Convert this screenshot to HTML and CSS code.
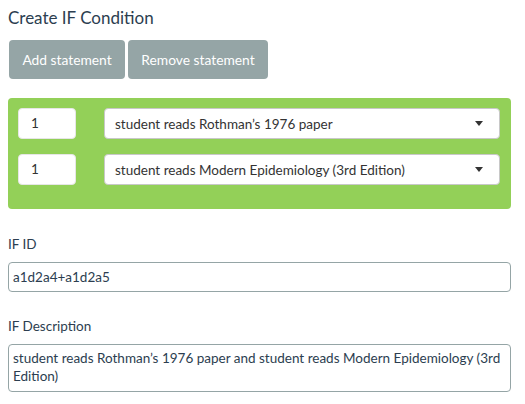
FILE: index.html
```html
<!DOCTYPE html>
<html>
<head>
<meta charset="utf-8">
<link rel="stylesheet" href="styles.css">
</head>
<body>
<div class="page">
  <h3 class="title">Create IF Condition</h3>
  <div class="btns">
    <button class="btn btn-add">Add statement</button>
    <button class="btn btn-remove">Remove statement</button>
  </div>
  <div class="panel">
    <div class="row">
      <div class="num">1</div>
      <div class="select"><span>student reads Rothman’s 1976 paper</span><i class="caret"></i></div>
    </div>
    <div class="row">
      <div class="num">1</div>
      <div class="select"><span>student reads Modern Epidemiology (3rd Edition)</span><i class="caret"></i></div>
    </div>
  </div>
  <label class="label label-id">IF ID</label>
  <div class="field">a1d2a4+a1d2a5</div>
  <label class="label label-desc">IF Description</label>
  <div class="field area">student reads Rothman’s 1976 paper and student reads Modern Epidemiology (3rd Edition)</div>
</div>
</body>
</html>
```

FILE: styles.css
```css
html, body { margin: 0; padding: 0; background: #fff; }
body {
  margin: 8px;
  font-family: Lato, "Open Sans", sans-serif;
  font-size: 13.5px;
  color: #2c3e50;
}
.page { width: 503px; }
.title {
  margin: 0;
  font-size: 17px;
  font-weight: 400;
  line-height: 20px;
  height: 20px;
  color: #2c3e50;
}
.btns {
  display: flex;
  gap: 3px;
  margin-top: 12px;
  padding-left: 1px;
}
.btn {
  height: 39px;
  border: none;
  border-radius: 4px;
  background: #95a5a6;
  color: #fff;
  font-family: Lato, sans-serif;
  font-size: 13.8px;
  padding: 0;
  line-height: 37px;
}
.btn-add { width: 116px; }
.btn-remove { width: 140px; }
.panel {
  margin-top: 19px;
  background: #93d058;
  border-radius: 4px;
  padding: 10px 11px 9px 10px;
}
.row {
  display: flex;
  margin-bottom: 15px;
  height: 31px;
}
.num {
  width: 58px;
  box-sizing: border-box;
  background: #fff;
  border: 1px solid #e6e6e6;
  border-radius: 4px;
  padding-left: 12px;
  line-height: 29px;
  color: #333;
}
.select {
  flex: 1;
  margin-left: 28px;
  box-sizing: border-box;
  background: #fff;
  border: 1px solid #c8c8c8;
  border-radius: 4px;
  padding-left: 10px;
  padding-right: 16px;
  display: flex;
  align-items: center;
  justify-content: space-between;
  color: #333;
}
.caret {
  width: 0;
  height: 0;
  border-left: 4px solid transparent;
  border-right: 4px solid transparent;
  border-top: 5px solid #333;
}
.label {
  display: block;
  line-height: 20px;
  color: #2c3e50;
}
.label-id { margin-top: 25px; }
.label-desc { margin-top: 24px; }
.field {
  margin-top: 8px;
  box-sizing: border-box;
  border: 1px solid #95a5a6;
  border-radius: 4px;
  padding: 5px 4px 4px;
  line-height: 18px;
  height: 30px;
  color: #2c3e50;
}
.field.area {
  height: 48px;
  padding: 4px 4px;
}
```
